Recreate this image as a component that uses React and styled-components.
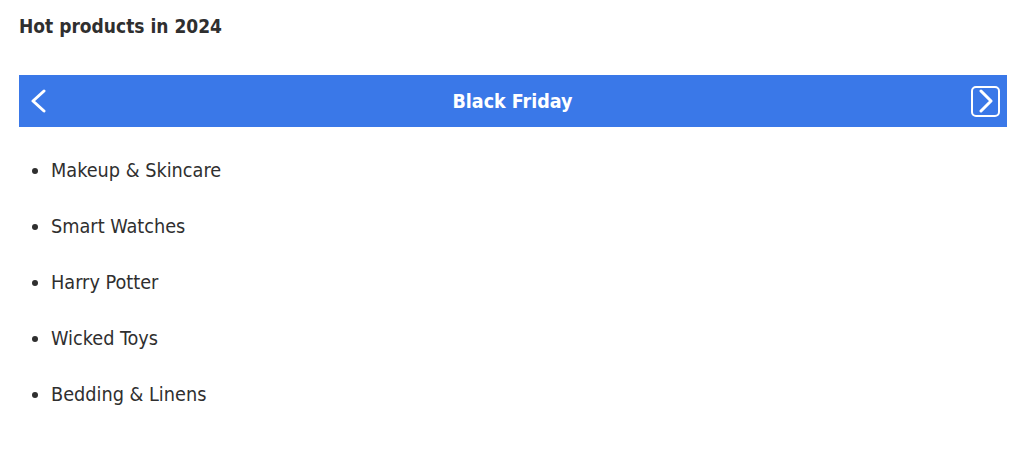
import React from "react";
import styled, { createGlobalStyle } from "styled-components";

const Global = createGlobalStyle`
  html, body { margin: 0; padding: 0; background: #fff; }
  body { font-family: "DejaVu Sans Condensed", "DejaVu Sans", sans-serif; color: #2f2f2f; }
`;

const Page = styled.div`
  padding: 12px 17px 0 19px;
`;

const Title = styled.h1`
  margin: 0;
  font-size: 19px;
  font-weight: bold;
  line-height: 28px;
  color: #2f2f2f;
`;

const Bar = styled.div`
  margin-top: 35px;
  height: 52px;
  background: #3a78e8;
  display: flex;
  align-items: center;
  justify-content: space-between;
  padding: 0 7px 0 11px;
`;

const NavButton = styled.button`
  width: ${(p) => (p.$boxed ? "29px" : "18px")};
  height: ${(p) => (p.$boxed ? "31px" : "24px")};
  padding: 0;
  border: ${(p) => (p.$boxed ? "2px solid #fff" : "none")};
  border-radius: 5px;
  background: transparent;
  display: flex;
  align-items: center;
  justify-content: center;
  cursor: pointer;
`;

const BarTitle = styled.div`
  color: #fff;
  font-weight: bold;
  font-size: 19.5px;
  margin-left: 6px;
`;

const List = styled.ul`
  margin: 0;
  padding: 16px 0 0 32px;
  list-style: disc;
`;

const Item = styled.li`
  font-size: 19.7px;
  line-height: 56px;
  color: #2f2f2f;
`;

const Chevron = ({ dir }) => (
  <svg width="18" height="24" viewBox="0 0 18 24" fill="none">
    <path
      d={dir === "left" ? "M14 2 L3 12 L14 22" : "M5 2 L15 12 L5 22"}
      stroke="#fff"
      strokeWidth="3"
      strokeLinecap="round"
      strokeLinejoin="round"
    />
  </svg>
);

const items = ["Makeup & Skincare", "Smart Watches", "Harry Potter", "Wicked Toys", "Bedding & Linens"];

export default function App() {
  return (
    <Page>
      <Global />
      <Title>Hot products in 2024</Title>
      <Bar>
        <NavButton aria-label="Previous"><Chevron dir="left" /></NavButton>
        <BarTitle>Black Friday</BarTitle>
        <NavButton $boxed aria-label="Next"><Chevron dir="right" /></NavButton>
      </Bar>
      <List>
        {items.map((t) => (
          <Item key={t}>{t}</Item>
        ))}
      </List>
    </Page>
  );
}
